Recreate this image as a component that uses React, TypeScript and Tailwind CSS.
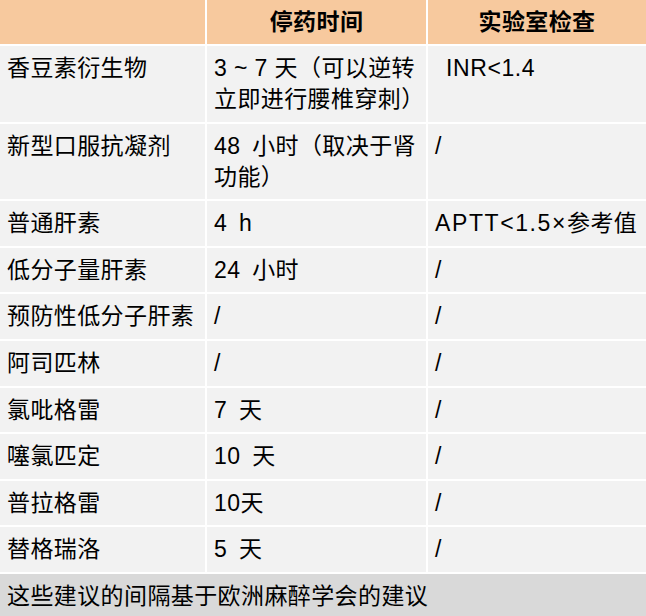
import React from "react";

type Row = { name: string; time: string; lab: React.ReactNode; ws?: boolean };

const rows: Row[] = [
  {
    name: "香豆素衍生物",
    time: "3 ~ 7 天（可以逆转立即进行腰椎穿刺）",
    lab: <span className="pl-[11px] tracking-[0.6px]">INR&lt;1.4</span>,
  },
  { name: "新型口服抗凝剂", time: "48 小时（取决于肾功能）", lab: "/", ws: true },
  {
    name: "普通肝素",
    time: "4 h",
    lab: (
      <span>
        <span className="tracking-[1.6px]">APTT&lt;1.5×</span>参考值
      </span>
    ),
    ws: true,
  },
  { name: "低分子量肝素", time: "24 小时", lab: "/", ws: true },
  { name: "预防性低分子肝素", time: "/", lab: "/" },
  { name: "阿司匹林", time: "/", lab: "/" },
  { name: "氯吡格雷", time: "7 天", lab: "/", ws: true },
  { name: "噻氯匹定", time: "10 天", lab: "/", ws: true },
  { name: "普拉格雷", time: "10天", lab: "/" },
  { name: "替格瑞洛", time: "5 天", lab: "/", ws: true },
];

export default function App() {
  return (
    <div className="w-[646px] h-[616px] overflow-hidden bg-white font-['Liberation_Sans','Noto_Sans_CJK_SC',sans-serif] text-[23px] text-black tracking-[0.4px]">
      <div className="grid grid-cols-[205px_219px_1fr] gap-[2px] bg-white">
        <div className="h-[44px] bg-[#f7c99e]" />
        <div className="h-[44px] bg-[#f7c99e] flex items-center justify-center font-bold">停药时间</div>
        <div className="h-[44px] bg-[#f7c99e] flex items-center justify-center font-bold">实验室检查</div>
        {rows.map((r) => (
          <React.Fragment key={r.name}>
            <div className="bg-[#f2f2f2] pl-[7px] pt-[7px] pb-[6.6px] leading-[31px]">{r.name}</div>
            <div
              className={
                "bg-[#f2f2f2] pl-[7px] pr-0 pt-[7px] pb-[6.6px] leading-[31px] " +
                (r.ws ? "[word-spacing:5px]" : "")
              }
            >
              {r.time}
            </div>
            <div className="bg-[#f2f2f2] pl-[7px] pt-[7px] pb-[6.6px] leading-[31px]">{r.lab}</div>
          </React.Fragment>
        ))}
        <div className="col-span-3 bg-[#d9d9d9] pl-[7px] pt-[7px] pb-[6px] leading-[31px]">
          这些建议的间隔基于欧洲麻醉学会的建议
        </div>
      </div>
    </div>
  );
}
